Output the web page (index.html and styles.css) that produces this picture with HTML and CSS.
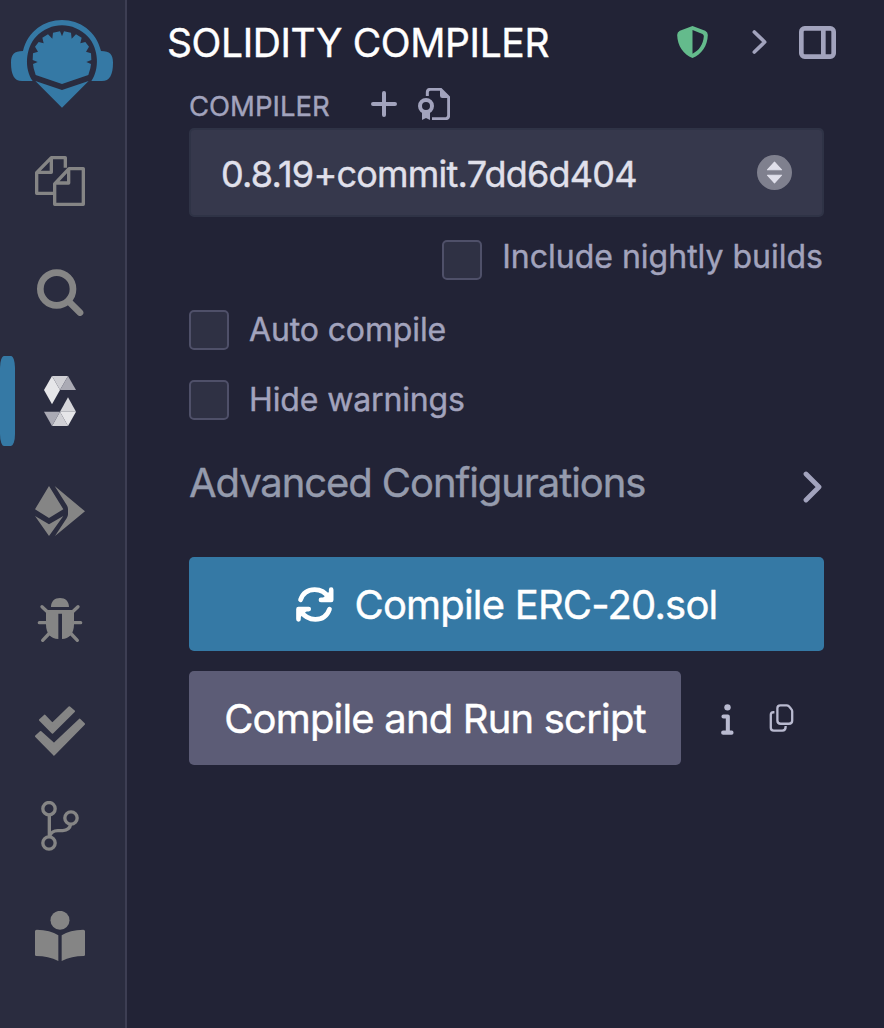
FILE: index.html
```html
<!DOCTYPE html>
<html lang="en">
<head>
<meta charset="utf-8">
<title>Solidity Compiler</title>
<link rel="stylesheet" href="styles.css">
</head>
<body>
<div class="app">
  <nav class="rail">
    <svg class="logo" viewBox="33 60 306 264" fill="currentColor">
      <path d="M69 153C42 153 33 164 33 188C33 224 43 243 66 243H98C73 207 75 146 108 110C152 64 220 64 264 110C297 146 299 207 274 243H306C329 243 339 224 339 188C339 164 330 153 303 153C289 94 239 60 186 60S83 94 69 153Z"/>
      <path d="M186 109L180 94L159 98L157 116L144 103L127 113L131 130L116 126L105 140L114 155L99 160L98 180L113 186L99 192L101 205L107 225L186 252L265 225L271 205L273 192L259 186L274 180L273 160L258 155L267 140L256 126L241 130L245 113L228 103L215 116L213 98L192 94Z"/>
      <path d="M106 243L186 270L266 243L186 323Z"/>
    </svg>
    <div class="rail-group">
      <svg class="rail-icon" viewBox="105 48 150 150" fill="none" stroke="currentColor" stroke-width="10" stroke-linejoin="round">
        <path d="M160 160H110V98L154 53H196V83M154 53V97H110"/>
        <path d="M164 132L207 86H250V193H164ZM206 86V129H165"/>
      </svg>
      <svg class="rail-icon" viewBox="105 378 150 150" fill="none" stroke="currentColor" stroke-width="20" stroke-linecap="round">
        <circle cx="170" cy="447" r="49"/><path d="M206 484L240 518"/>
      </svg>
      <div class="rail-item">
        <span class="marker"></span>
        <svg class="rail-icon" viewBox="105 93 150 150">
          <path fill="#e6e6e9" d="M156 93L180 135L156 178L132 135Z"/>
          <path fill="#d0d0d5" d="M156 93H204L180 135Z"/>
          <path fill="#aaaab4" d="M204 93L228 135H180Z"/>
          <path fill="#d6d6da" d="M204 157L228 200H180Z"/>
          <path fill="#e6e6e9" d="M228 200L204 243L180 200Z"/>
          <path fill="#d0d0d5" d="M180 200L204 243H156Z"/>
          <path fill="#aaaab4" d="M132 200H180L156 243Z"/>
        </svg>
      </div>
      <svg class="rail-icon" viewBox="105 423 150 150" fill="currentColor">
        <path d="M147 423L190 493L147 519L105 493ZM105 513L147 538L190 513L147 573ZM164 423L255 499L165 573L200 520Q204 514 204 508V492Q204 486 200 480Z"/>
      </svg>
      <svg class="rail-icon" viewBox="105 48 150 150" fill="currentColor">
        <path d="M153 81C153 64 164 54 180 54S207 64 207 81ZM138 90H222V133C222 162 207 177 186 177V101H175V177C153 177 138 162 138 133Z"/>
        <path fill="none" stroke="currentColor" stroke-width="10" stroke-linecap="round" d="M126 80L142 95M234 80L218 95M118 128H138M242 128H222M128 181L146 162M232 181L214 162"/>
      </svg>
      <svg class="rail-icon" viewBox="105 378 150 150" fill="currentColor" stroke="currentColor" stroke-width="6" stroke-linejoin="round">
        <path d="M120 420L134 407L157 431L208 382L222 394L157 458ZM108 469L122 456L162 492L239 419L252 432L162 524Z"/>
      </svg>
    </div>
    <div class="rail-group lower">
      <svg class="rail-icon" viewBox="105 63 150 150" fill="none" stroke="currentColor" stroke-width="10">
        <circle cx="147" cy="86" r="18.500"/><circle cx="213" cy="114" r="18.500"/><circle cx="147" cy="189" r="18.500"/>
        <path d="M148 104V170C154 155 161 152 173 152H188C203 151 210 145 212 133"/>
      </svg>
      <svg class="rail-icon" viewBox="105 393 150 150" fill="currentColor">
        <circle cx="180" cy="421" r="28.500"/>
        <path d="M110 449Q151 450 175 466V543Q145 528 109 528Q105 528 105 524V454Q105 449 110 449ZM250 449Q209 450 185 466V543Q215 528 251 528Q255 528 255 524V454Q255 449 250 449Z"/>
      </svg>
    </div>
  </nav>
  <main class="panel">
    <header class="head">
      <h1 class="title"><span class="t-title">SOLIDITY COMPILER</span></h1>
      <div class="head-icons">
        <svg class="shield" viewBox="112 48 92 96" fill="currentColor" fill-rule="evenodd"><path d="M158 48L196 62Q204 66 204 75C203 108 185 133 158 144C131 133 113 108 112 75Q112 66 120 62ZM158 60L188 72Q192 74 192 79C190 103 178 122 158 131Z"/></svg>
        <svg class="chev" viewBox="338 60 43 72"><path d="M344 66L375 96L344 126"/></svg>
        <svg class="dock" viewBox="477 48 111 99" fill="none" stroke="currentColor" stroke-width="14"><rect x="484" y="55" width="97" height="85" rx="10"/><path d="M550 55V140"/></svg>
      </div>
    </header>
    <div class="content">
      <div class="label-row">
        <span class="t-compiler">COMPILER</span>
        <svg class="plus" viewBox="633 243 78 78"><path d="M672 249V315M639 282H705"/></svg>
        <svg class="cert" viewBox="774 234 96 96" fill="none" stroke="currentColor" stroke-width="9">
          <path d="M802 258V247Q802 238 811 238H842L866 262V316Q866 326 857 326H816"/>
          <path fill="currentColor" stroke="none" d="M840 236L868 264H847Q840 264 840 257ZM786 307H810V330L798 324L786 330Z"/>
          <circle cx="798" cy="288" r="18" stroke-width="12"/>
        </svg>
      </div>
      <div class="select">
        <span class="t-version">0.8.19+commit.7dd6d404</span>
        <svg class="sorter" viewBox="650 106 104 104"><circle cx="702" cy="158" r="52" fill="#7f808e"/><path fill="#e0e0eb" stroke="#e0e0eb" stroke-width="3" stroke-linejoin="round" d="M702 127L723 150H681ZM702 189L723 166H681Z"/></svg>
      </div>
      <div class="check nightly"><span class="box"></span><span class="t-nightly">Include nightly builds</span></div>
      <div class="check"><span class="box"></span><span class="t-auto">Auto compile</span></div>
      <div class="check"><span class="box"></span><span class="t-hide">Hide warnings</span></div>
      <div class="advanced">
        <span class="t-adv">Advanced Configurations</span>
        <svg class="chev big" viewBox="803 471 19 32"><path d="M806 474L819 487L806 500"/></svg>
      </div>
      <button class="btn primary">
        <svg class="refresh" viewBox="348 139 114 106" fill="none" stroke="currentColor" stroke-width="14" stroke-linecap="round" stroke-linejoin="round">
          <path d="M361 178C368 158 384 147 404 147C424 147 438 157 447 172M449 206C442 226 426 237 406 237C386 237 372 227 362 212"/>
          <path fill="currentColor" d="M454 147V178H423ZM355 237V206H386Z" stroke="none"/>
          <path d="M454 147V178H423M355 237V206H386"/>
        </svg>
        <span class="t-compile">Compile ERC-20.sol</span>
      </button>
      <div class="run-row">
        <button class="btn secondary"><span class="t-run">Compile and Run script</span></button>
        <svg class="info" viewBox="542 491 38 92" fill="currentColor"><circle cx="561" cy="501" r="9.500"/><path fill="none" stroke="currentColor" stroke-width="12" stroke-linecap="round" stroke-linejoin="round" d="M549 528H562V576M548 576H573"/></svg>
        <svg class="copy" viewBox="690 491 73 85" fill="none" stroke="currentColor" stroke-width="7" stroke-linejoin="round"><path d="M723 495H742Q746 495 749 498L756 506Q759 509 759 513V541Q759 551 749 551H724Q714 551 714 541V504Q714 495 723 495ZM705 516H702Q694 516 694 524V563Q694 572 703 572H729Q739 572 739 561V558"/></svg>
      </div>
    </div>
  </main>
</div>
</body>
</html>
```
FILE: styles.css
```css
* { box-sizing: border-box; }
body { margin: 0; background: #222336; font-family: Inter, "Liberation Sans", sans-serif; font-weight: 400; -webkit-text-stroke: 0.400px currentColor; color: #a2a3bd; }
svg { display: block; flex: none; }
.app { display: flex; width: 884px; height: 1028px; overflow: hidden; }
.rail { width: 127px; flex: none; background: #2a2c3f; border-right: 2px solid #3d3e53; color: #858585; padding-top: 20px; }
.logo { width: 102px; height: 88px; margin-left: 11px; color: #3579a5; }
.rail-group { display: flex; flex-direction: column; gap: 60px; margin-top: 48px; padding-left: 35px; }
.rail-group.lower { margin-top: 45px; }
.rail-icon { width: 50px; height: 50px; }
.rail-item { position: relative; }
.marker { position: absolute; left: -35px; top: -20px; width: 15px; height: 90px; border-radius: 4px / 12px; background: #3579a5; }
.panel { flex: 1; }
.head { display: flex; height: 86px; padding: 0 48px 0 40px; justify-content: space-between; align-items: center; }
.title { margin: 0; font-size: 39px; font-weight: 400; line-height: 86px; letter-spacing: -0.400px; color: #fff; white-space: nowrap; }
.head-icons { display: flex; align-items: center; padding-bottom: 2px; }
.shield { width: 31px; height: 32px; color: #64bb8c; margin-right: 44px; }
.chev { width: 15px; height: 24px; fill: none; stroke: currentColor; stroke-width: 11; stroke-linecap: round; stroke-linejoin: round; }
.head .chev { margin-right: 32px; }
.chev.big { width: 19px; height: 32px; stroke-width: 4.800; margin-top: 7px; }
.dock { width: 37px; height: 33px; }
.content { margin-left: 62px; width: 635px; }
.label-row { display: flex; align-items: center; height: 42px; padding-bottom: 6px; font-size: 27.500px; }
.t-compiler { width: 182px; padding-top: 3px; }
.plus { width: 26px; height: 26px; fill: none; stroke: currentColor; stroke-width: 12; stroke-linecap: round; margin-right: 21px; }
.cert { width: 32px; height: 32px; }
.select { display: flex; align-items: center; justify-content: space-between; height: 89px; padding: 0 30px; border: 2px solid #2f3346; border-radius: 5px; background: #36384c; color: #e0e0eb; font-size: 36px; letter-spacing: -0.770px; }
.t-version { padding-top: 2px; }
.sorter { width: 35px; height: 35px; }
.check { display: flex; align-items: center; height: 40px; margin-bottom: 30px; gap: 20px; font-size: 32px; letter-spacing: -0.130px; white-space: nowrap; }
.check > span + span { margin-bottom: 2px; }
.check.nightly { margin-top: 23px; justify-content: flex-end; letter-spacing: 0; padding-right: 1px; }
.check.nightly .t-nightly { margin-bottom: 8px; }
.box { width: 40px; height: 40px; flex: none; border: 2px solid #4f5069; border-radius: 5px; background: #2f3144; }
.advanced { display: flex; align-items: center; justify-content: space-between; height: 67px; margin-bottom: 40px; padding-right: 2px; font-size: 40px; letter-spacing: -1.080px; color: #959bad; }
.t-adv { margin-bottom: 2px; }
.advanced .chev { color: #a2a3bd; }
.btn { display: flex; align-items: center; justify-content: center; height: 94px; border: 0; padding: 0; border-radius: 5px; color: #fff; font: 400 40px Inter, "Liberation Sans", sans-serif; letter-spacing: -0.820px; white-space: nowrap; }
.primary { width: 635px; background: #3579a5; }
.refresh { width: 38px; height: 35px; margin-right: 21px; }
.run-row { display: flex; align-items: center; margin-top: 20px; }
.secondary { width: 492px; background: #5c5c76; }
.info { width: 13px; height: 31px; margin: 3px 36px 0 40px; color: #b9bad0; }
.copy { width: 25px; height: 28px; margin-left: -1px; color: #b9bad0; }
```
